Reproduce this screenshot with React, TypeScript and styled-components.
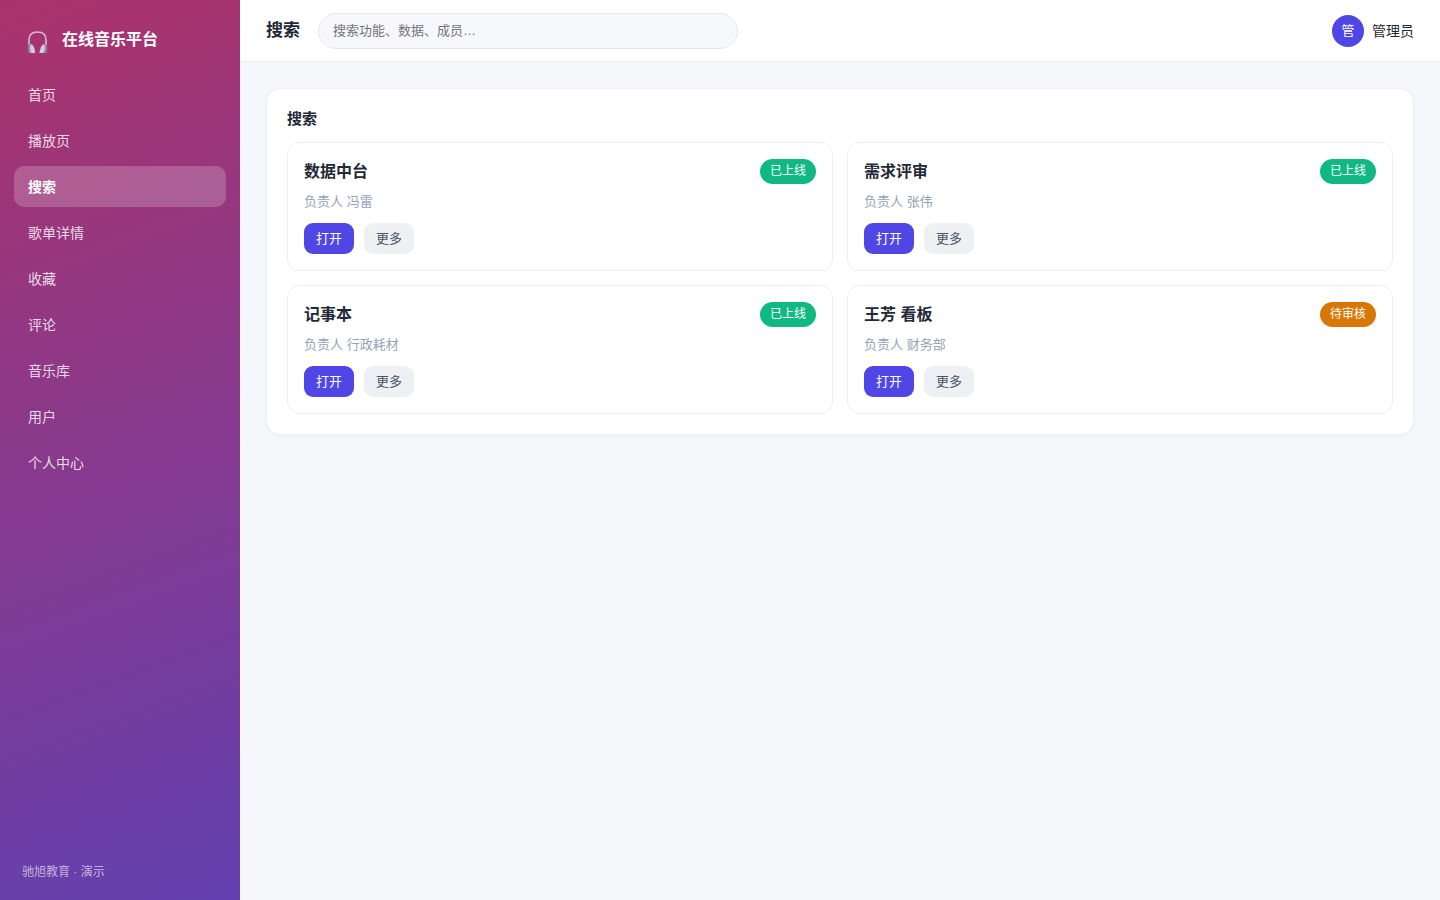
import React from 'react';
import styled, { createGlobalStyle } from 'styled-components';

const GlobalStyle = createGlobalStyle`
  *, *::before, *::after { box-sizing: border-box; }
  body {
    margin: 0;
    background: #f5f7fb;
    color: #1f2937;
    font-family: "Liberation Sans", "Noto Sans CJK SC", sans-serif;
    font-size: 14px;
    line-height: 20px;
  }
  button, input { font: inherit; }
  h1, h2, h3, p { margin: 0; }
`;

const Shell = styled.div`
  display: flex;
  min-height: 100vh;
`;

const Sidebar = styled.aside`
  display: flex;
  flex-direction: column;
  flex: 0 0 240px;
  padding: 22px 14px 18px;
  background: linear-gradient(160deg, #ab336b, #6340b0);
  color: #fff;
`;

const Brand = styled.div`
  display: flex;
  align-items: center;
  gap: 14px;
  height: 36px;
  margin-bottom: 16px;
  padding: 0 12px;
  font-size: 16px;
  font-weight: 700;
`;

const Nav = styled.nav`
  display: flex;
  flex-direction: column;
  gap: 5px;
`;

const NavLink = styled.a<{ $active: boolean }>`
  display: flex;
  align-items: center;
  height: 41px;
  padding: 0 14px;
  border-radius: 10px;
  background: ${({ $active }) => ($active ? 'rgba(255, 255, 255, 0.2)' : 'transparent')};
  color: ${({ $active }) => ($active ? '#fff' : 'rgba(255, 255, 255, 0.82)')};
  font-weight: ${({ $active }) => ($active ? 700 : 400)};
  text-decoration: none;
`;

const SidebarFooter = styled.footer`
  margin-top: auto;
  padding: 0 8px;
  color: rgba(255, 255, 255, 0.6);
  font-size: 12px;
`;

const Content = styled.div`
  flex: 1;
  min-width: 0;
`;

const Topbar = styled.header`
  display: flex;
  align-items: center;
  gap: 18px;
  height: 62px;
  padding: 0 26px;
  border-bottom: 1px solid #eeeff3;
  background: #fff;
`;

const PageTitle = styled.h1`
  font-size: 17px;
  font-weight: 700;
`;

const SearchInput = styled.input`
  flex: 0 1 420px;
  min-width: 0;
  height: 36px;
  padding: 0 14px;
  border: 1px solid #e5e7f0;
  border-radius: 18px;
  background: #f7f8fc;
  font-size: 13px;

  &::placeholder { color: #757575; }
`;

const User = styled.div`
  display: flex;
  align-items: center;
  gap: 8px;
  margin-left: auto;
  white-space: nowrap;
`;

const Avatar = styled.span`
  display: grid;
  place-items: center;
  width: 32px;
  height: 32px;
  border-radius: 50%;
  background: #4f46e5;
  color: #fff;
  font-size: 13px;
`;

const Main = styled.main`
  padding: 26px;
`;

const Panel = styled.section`
  padding: 20px;
  border: 1px solid #eff0f4;
  border-radius: 14px;
  background: #fff;
  box-shadow: 0 1px 4px rgba(30, 41, 90, 0.05);
`;

const PanelTitle = styled.h2`
  margin-bottom: 13px;
  font-size: 15px;
  font-weight: 700;
`;

const CardGrid = styled.div`
  display: grid;
  grid-template-columns: repeat(2, minmax(0, 1fr));
  gap: 14px;
`;

const Card = styled.article`
  padding: 16px;
  border: 1px solid #eeeff3;
  border-radius: 12px;
`;

const CardHead = styled.div`
  display: flex;
  align-items: center;
  justify-content: space-between;
`;

const CardTitle = styled.h3`
  font-size: 16px;
  font-weight: 700;
`;

const Badge = styled.span<{ $tone: 'online' | 'pending' }>`
  height: 25px;
  padding: 0 10px;
  border-radius: 13px;
  background: ${({ $tone }) => ($tone === 'online' ? '#10b981' : '#d97706')};
  color: #fff;
  font-size: 12px;
  line-height: 25px;
`;

const Owner = styled.p`
  margin: 8px 0 11px;
  color: #94a3b8;
  font-size: 13px;
`;

const Actions = styled.div`
  display: flex;
  gap: 10px;
`;

const Button = styled.button<{ $primary?: boolean }>`
  height: 31px;
  padding: 0 12px;
  border: 0;
  border-radius: 9px;
  background: ${({ $primary }) => ($primary ? '#4f46e5' : '#eef0f4')};
  color: ${({ $primary }) => ($primary ? '#fff' : '#475569')};
  font-size: 13px;
  cursor: pointer;
`;

const navItems = ['首页', '播放页', '搜索', '歌单详情', '收藏', '评论', '音乐库', '用户', '个人中心'];

const cards: { title: string; owner: string; status: string; tone: 'online' | 'pending' }[] = [
  { title: '数据中台', owner: '冯雷', status: '已上线', tone: 'online' },
  { title: '需求评审', owner: '张伟', status: '已上线', tone: 'online' },
  { title: '记事本', owner: '行政耗材', status: '已上线', tone: 'online' },
  { title: '王芳 看板', owner: '财务部', status: '待审核', tone: 'pending' },
];

const Headphones = () => (
  <svg width="22" height="28" viewBox="0 0 22 28" aria-hidden="true">
    <path d="M3 19V14C3 9 6 6 11.500 6S20 9 20 14V19" fill="none" stroke="#c9bfd6" strokeWidth="1.600" />
    <path d="M4.500 18.500C2.500 18.500 1.800 20 2 22L2.500 27H6Z" fill="#8f87a8" />
    <path d="M18.500 18.500C20.500 18.500 21.200 20 21 22L20.500 27H17Z" fill="#8f87a8" />
    <path d="M5 18C7 18.500 9 22 9 27H5C4 24 3.500 20 5 18Z" fill="#d3cbdf" />
    <path d="M18 18C16 18.500 14 22 13.500 27H17.500C19 24 19.500 20 18 18Z" fill="#d3cbdf" />
  </svg>
);

export default function App() {
  return (
    <>
      <GlobalStyle />
      <Shell>
        <Sidebar>
          <Brand>
            <Headphones />
            <span>在线音乐平台</span>
          </Brand>
          <Nav>
            {navItems.map((item) => (
              <NavLink key={item} href="#" $active={item === '搜索'} aria-current={item === '搜索' ? 'page' : undefined}>
                {item}
              </NavLink>
            ))}
          </Nav>
          <SidebarFooter>驰旭教育 · 演示</SidebarFooter>
        </Sidebar>
        <Content>
          <Topbar>
            <PageTitle>搜索</PageTitle>
            <SearchInput type="search" aria-label="搜索" placeholder="搜索功能、数据、成员…" />
            <User>
              <Avatar>管</Avatar>
              <span>管理员</span>
            </User>
          </Topbar>
          <Main>
            <Panel>
              <PanelTitle>搜索</PanelTitle>
              <CardGrid>
                {cards.map((card) => (
                  <Card key={card.title}>
                    <CardHead>
                      <CardTitle>{card.title}</CardTitle>
                      <Badge $tone={card.tone}>{card.status}</Badge>
                    </CardHead>
                    <Owner>负责人 {card.owner}</Owner>
                    <Actions>
                      <Button type="button" $primary>打开</Button>
                      <Button type="button">更多</Button>
                    </Actions>
                  </Card>
                ))}
              </CardGrid>
            </Panel>
          </Main>
        </Content>
      </Shell>
    </>
  );
}
